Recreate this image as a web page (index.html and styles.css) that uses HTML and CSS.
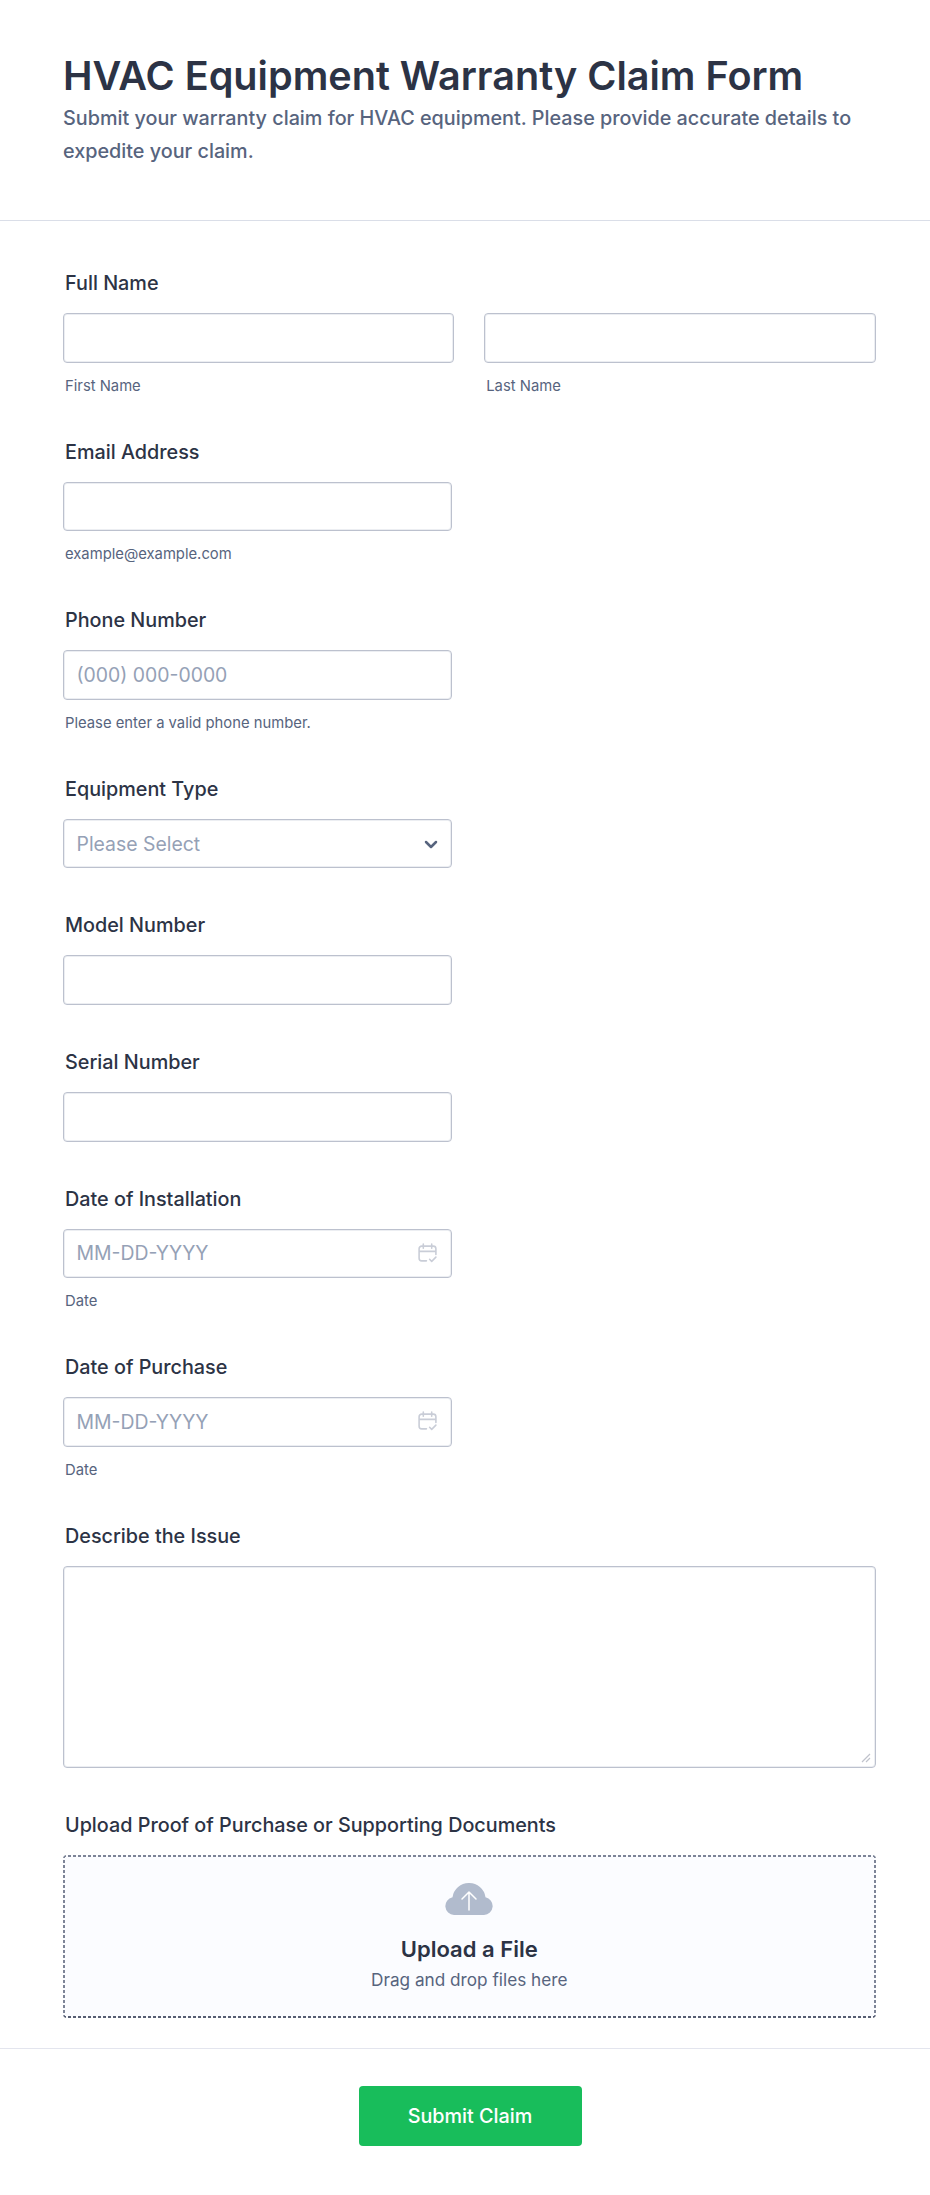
FILE: index.html
```html
<!DOCTYPE html>
<html lang="en">
<head>
<meta charset="utf-8">
<title>HVAC Equipment Warranty Claim Form</title>
<link rel="stylesheet" href="styles.css">
</head>
<body>
<main class="form">
  <header class="form-header">
    <h1 class="title">HVAC Equipment Warranty Claim Form</h1>
    <p class="subtitle">Submit your warranty claim for HVAC equipment. Please provide accurate details to expedite your claim.</p>
  </header>
  <section class="fields">
    <div class="field">
      <label class="label">Full Name</label>
      <div class="name-row">
        <div class="name-col">
          <input class="input" type="text">
          <span class="sub">First Name</span>
        </div>
        <div class="name-col">
          <input class="input" type="text">
          <span class="sub">Last Name</span>
        </div>
      </div>
    </div>
    <div class="field">
      <label class="label">Email Address</label>
      <input class="input half" type="text">
      <span class="sub">example@example.com</span>
    </div>
    <div class="field">
      <label class="label">Phone Number</label>
      <input class="input half" type="text" placeholder="(000) 000-0000">
      <span class="sub">Please enter a valid phone number.</span>
    </div>
    <div class="field">
      <label class="label">Equipment Type</label>
      <div class="control half">
        <input class="input" type="text" placeholder="Please Select">
        <svg class="chevron" viewBox="0 0 14 9" width="14" height="9"><path d="M2 2l5 5 5-5" fill="none" stroke="#57647e" stroke-width="2.500" stroke-linecap="round" stroke-linejoin="round"/></svg>
      </div>
    </div>
    <div class="field">
      <label class="label">Model Number</label>
      <input class="input half" type="text">
    </div>
    <div class="field">
      <label class="label">Serial Number</label>
      <input class="input half" type="text">
    </div>
    <div class="field">
      <label class="label">Date of Installation</label>
      <div class="control half">
        <input class="input" type="text" placeholder="MM-DD-YYYY">
        <svg class="calendar" viewBox="0 0 20 20" width="21" height="21"><path d="M9 17H4.500A2.500 2.500 0 0 1 2 14.500V5.500A2.500 2.500 0 0 1 4.500 3h11A2.500 2.500 0 0 1 18 5.500V11M2 8h16M6 1v4M14 1v4M12 15.500l2 2 4-4" fill="none" stroke="#c9cdd7" stroke-width="1.500" stroke-linecap="round" stroke-linejoin="round"/></svg>
      </div>
      <span class="sub">Date</span>
    </div>
    <div class="field">
      <label class="label">Date of Purchase</label>
      <div class="control half">
        <input class="input" type="text" placeholder="MM-DD-YYYY">
        <svg class="calendar" viewBox="0 0 20 20" width="21" height="21"><path d="M9 17H4.500A2.500 2.500 0 0 1 2 14.500V5.500A2.500 2.500 0 0 1 4.500 3h11A2.500 2.500 0 0 1 18 5.500V11M2 8h16M6 1v4M14 1v4M12 15.500l2 2 4-4" fill="none" stroke="#c9cdd7" stroke-width="1.500" stroke-linecap="round" stroke-linejoin="round"/></svg>
      </div>
      <span class="sub">Date</span>
    </div>
    <div class="field">
      <label class="label">Describe the Issue</label>
      <div class="control">
        <textarea class="textarea"></textarea>
        <svg class="grip" viewBox="0 0 10 10" width="10" height="10"><path d="M1 9L9 1M5 9l4-4" fill="none" stroke="#c0c3cc" stroke-width="1.200"/></svg>
      </div>
    </div>
    <div class="field">
      <label class="label">Upload Proof of Purchase or Supporting Documents</label>
      <div class="upload">
        <svg class="cloud" viewBox="0 0 48 32" width="48" height="32">
          <path d="M9 32A9 9 0 0 1 7.500 14.200 16.500 16.500 0 0 1 24 0a16.500 16.500 0 0 1 16.500 14.200A9 9 0 0 1 39 32Z" fill="#b1bbcd"/>
          <path d="M24 27V9M17 16l7-7 7 7" fill="none" stroke="#fff" stroke-width="1.500" stroke-linecap="round" stroke-linejoin="round"/>
        </svg>
        <strong class="upload-title">Upload a File</strong>
        <span class="upload-hint">Drag and drop files here</span>
      </div>
    </div>
  </section>
  <footer class="actions">
    <button class="submit" type="button">Submit Claim</button>
  </footer>
</main>
</body>
</html>
```
FILE: styles.css
```css
* { box-sizing: border-box; }
html, body { margin: 0; padding: 0; background: #fff; }
body { font-family: Inter, "Liberation Sans", sans-serif; color: #2c3345; }
.form { width: 930px; }
.form-header { height: 221px; padding: 50px 63px 0; border-bottom: 1px solid #dadee8; }
.title { margin: 0; font-size: 39.600px; line-height: 52px; font-weight: 600; color: #2c3345; }
.subtitle { margin: 0; font-size: 19.800px; line-height: 33px; font-weight: 500; color: #57647e; }
.fields { display: flex; flex-direction: column; gap: 45px; padding: 50px 55px 30px 63px; border-bottom: 1px solid #e3e5ee; }
.field { display: flex; flex-direction: column; align-items: flex-start; }
.label { margin: 0 0 18px 2px; font-size: 19.800px; line-height: 24px; font-weight: 500; color: #2c3345; }
.input { display: block; width: 100%; height: 49.600px; padding: 0 12.500px; border: 1px solid #bcc1ce; border-radius: 4px; box-shadow: inset 0 0 0 1px #eceef2; background: #fff; font: 400 19.400px Inter, sans-serif; color: #2c3345; outline: none; }
.input::placeholder { color: #95a1b6; opacity: 1; }
.half { width: 389px; }
.name-row { display: flex; gap: 30px; width: 812.500px; }
.name-col { display: flex; flex: 1; flex-direction: column; align-items: flex-start; }
.sub { margin: 13px 0 -1px 2px; font-size: 14.800px; line-height: 20px; color: #57647e; }
.control { position: relative; }
.chevron { position: absolute; right: 14px; top: 21px; }
.calendar { position: absolute; right: 14px; top: 14px; }
.grip { position: absolute; right: 5px; bottom: 5px; }
.textarea { display: block; width: 812.500px; height: 202px; border: 1px solid #bcc1ce; border-radius: 4px; box-shadow: inset 0 0 0 1px #eceef2; background: #fff; outline: none; resize: none; }
.upload { display: flex; flex-direction: column; align-items: center; width: 812.500px; height: 163px; padding-top: 28px; border-radius: 4px; background-color: #fbfcff; background-image: repeating-linear-gradient(90deg, #7d8497 0 3px, transparent 3px 5px), repeating-linear-gradient(90deg, #565d72 0 3px, transparent 3px 5px), repeating-linear-gradient(0deg, #7d8497 0 3px, transparent 3px 5px), repeating-linear-gradient(0deg, #7d8497 0 3px, transparent 3px 5px); background-size: 100% 2px, 100% 2px, 2px 100%, 2px 100%; background-position: 0 0, 0 100%, 0 0, 100% 0; background-repeat: no-repeat; }
.upload-title { margin-top: 19px; font-size: 22px; line-height: 30px; font-weight: 600; color: #2c3345; }
.upload-hint { margin-top: 4px; font-size: 17.200px; line-height: 24px; color: #57647e; }
.actions { display: flex; justify-content: center; padding: 37px 0 49px 10px; }
.submit { width: 223px; height: 60px; border: 0; border-radius: 4px; background: #18bd5b; color: #fff; font: 500 19.800px Inter, sans-serif; }
```
